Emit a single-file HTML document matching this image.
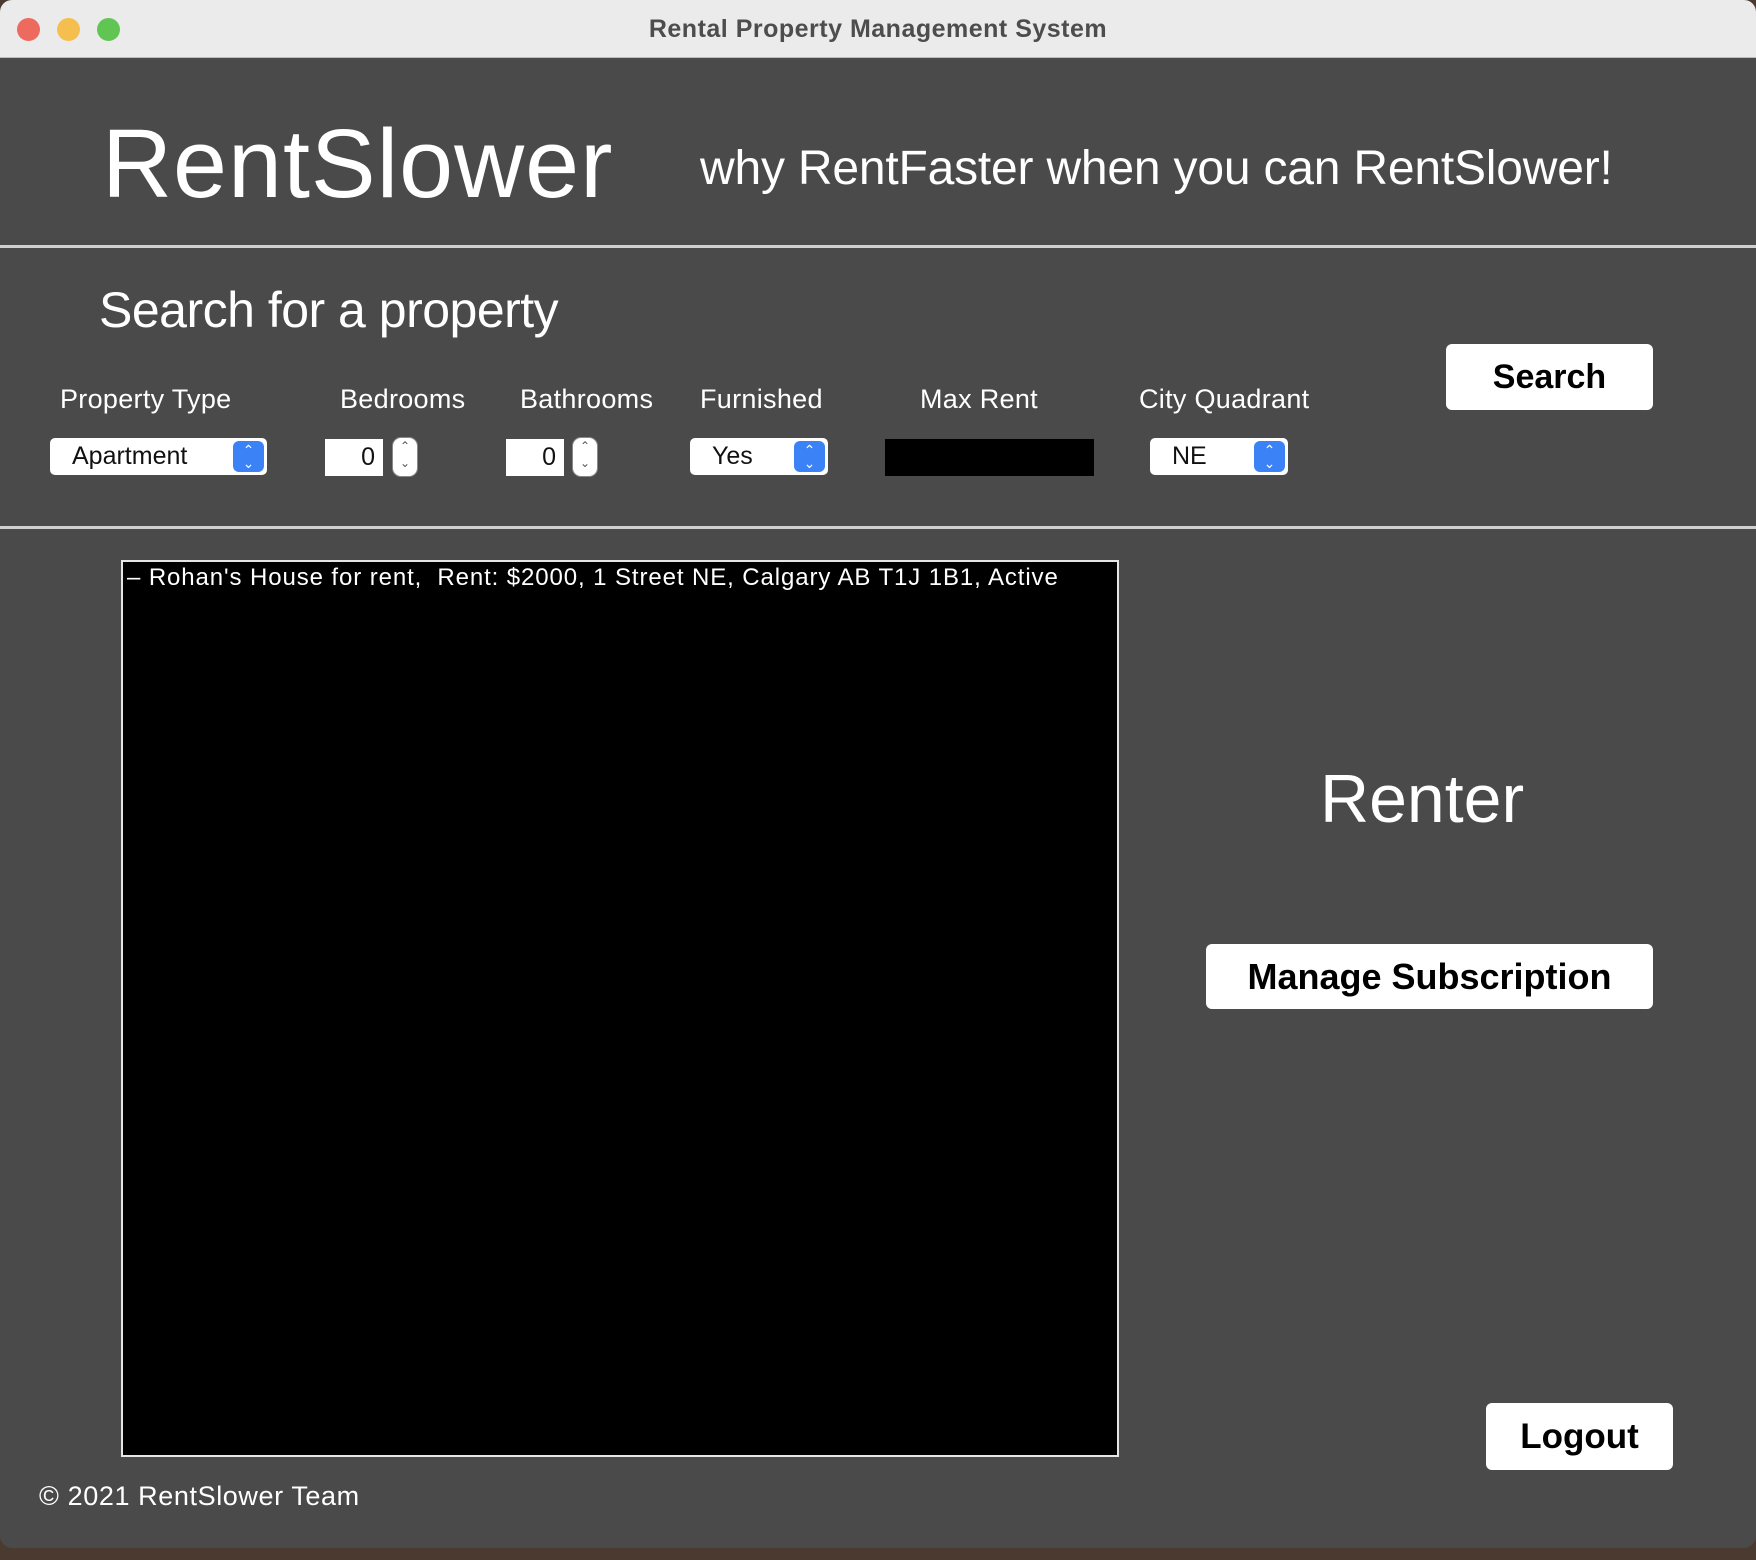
<!DOCTYPE html>
<html><head><meta charset="utf-8"><style>
*{margin:0;padding:0;box-sizing:border-box}
body{width:1756px;height:1560px;background:#4a3a30;font-family:"Liberation Sans",sans-serif;position:relative;overflow:hidden}
.win{position:absolute;left:0;top:0;width:1756px;height:1548px;background:#4a4a4a;border-radius:12px;overflow:hidden}
.tb{position:absolute;left:0;top:0;width:1756px;height:58px;background:#ebebeb;border-bottom:1px solid #bdbdbd}
.dot{position:absolute;top:18px;width:23px;height:23px;border-radius:50%}
.t{position:absolute;white-space:nowrap;color:#fff}
.hr{position:absolute;left:0;width:1756px;height:3px;background:#d0d0d0}
.combo{position:absolute;top:438px;height:37px;background:#fff;border-radius:5px;color:#111;font-size:25px;line-height:37px;padding-left:22px}
.combo .b{position:absolute;right:3px;top:3px;width:31px;height:31px;background:#3b82f6;border-radius:6px;color:#fff;font-size:14px;line-height:13px;text-align:center;padding-top:3px}
.spin{position:absolute;top:439px;height:37px;width:58px;background:#fff;color:#111;font-size:25px;line-height:37px;text-align:right;padding-right:8px}
.arr{position:absolute;top:437px;width:26px;height:40px;background:#fff;border-radius:9px;border:1px solid #888;color:#555;font-size:12px;line-height:17px;text-align:center}
.btn{position:absolute;background:#fff;border-radius:6px;color:#000;font-weight:bold;text-align:center}
.lab{position:absolute;top:384px;font-size:27px;color:#fff;white-space:nowrap;letter-spacing:0.3px}
</style></head><body>
<div class="win">
<div class="tb">
<div class="dot" style="left:17px;background:#ec6a5e"></div>
<div class="dot" style="left:57px;background:#f4bf4f"></div>
<div class="dot" style="left:97px;background:#61c554"></div>
<div class="t" style="left:0;width:1756px;text-align:center;top:15px;font-size:25px;font-weight:bold;color:#4d4d4d;letter-spacing:0.5px">Rental Property Management System</div>
</div>
<div class="t" style="left:102px;top:108px;font-size:97px;letter-spacing:1px">RentSlower</div>
<div class="t" style="left:700px;top:141px;font-size:48px;letter-spacing:-0.2px">why RentFaster when you can RentSlower!</div>
<div class="hr" style="top:245px"></div>
<div class="t" style="left:99px;top:281px;font-size:50px;letter-spacing:-0.5px">Search for a property</div>
<div class="lab" style="left:60px">Property Type</div>
<div class="lab" style="left:340px">Bedrooms</div>
<div class="lab" style="left:520px">Bathrooms</div>
<div class="lab" style="left:700px">Furnished</div>
<div class="lab" style="left:920px">Max Rent</div>
<div class="lab" style="left:1139px">City Quadrant</div>
<div class="combo" style="left:50px;width:217px">Apartment<div class="b">⌃<br>⌄</div></div>
<div class="spin" style="left:325px">0</div><div class="arr" style="left:392px">⌃<br>⌄</div>
<div class="spin" style="left:506px">0</div><div class="arr" style="left:572px">⌃<br>⌄</div>
<div class="combo" style="left:690px;width:138px">Yes<div class="b">⌃<br>⌄</div></div>
<div style="position:absolute;left:885px;top:439px;width:209px;height:37px;background:#000"></div>
<div class="combo" style="left:1150px;width:138px">NE<div class="b">⌃<br>⌄</div></div>
<div class="btn" style="left:1446px;top:344px;width:207px;height:66px;font-size:34px;line-height:66px">Search</div>
<div class="hr" style="top:526px"></div>
<div style="position:absolute;left:121px;top:560px;width:998px;height:897px;background:#000;border:2px solid #e6e6e6"></div>
<div class="t" style="left:127px;top:564px;font-size:24px;letter-spacing:0.9px">– Rohan's House for rent,&nbsp; Rent: $2000, 1 Street NE, Calgary AB T1J 1B1, Active</div>
<div class="t" style="left:1320px;top:760px;font-size:68px;letter-spacing:0px">Renter</div>
<div class="btn" style="left:1206px;top:944px;width:447px;height:65px;font-size:36px;line-height:65px">Manage Subscription</div>
<div class="btn" style="left:1486px;top:1403px;width:187px;height:67px;font-size:35px;line-height:67px">Logout</div>
<div class="t" style="left:39px;top:1481px;font-size:27px;letter-spacing:0.6px">© 2021 RentSlower Team</div>
</div>
</body></html>
